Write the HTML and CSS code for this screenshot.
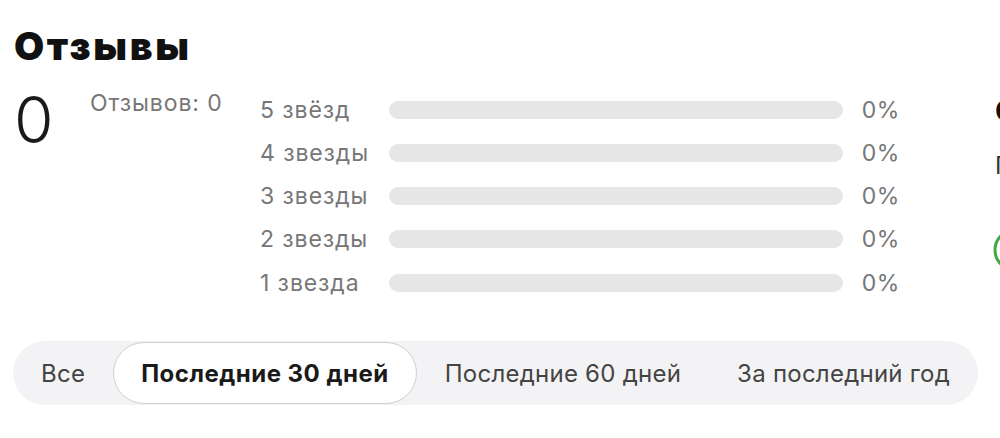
FILE: index.html
```html
<!DOCTYPE html>
<html lang="ru">
<head>
<meta charset="utf-8">
<title>Отзывы</title>
<link rel="stylesheet" href="styles.css">
</head>
<body>
<main class="page">
  <h1 class="title">Отзывы</h1>
  <section class="summary">
    <div class="score">0</div>
    <div class="count">Отзывов: 0</div>
    <ul class="dist">
      <li class="dist-row"><span class="dist-label">5 звёзд</span><span class="bar"><span class="bar-fill" style="width:0%"></span></span><span class="pct">0%</span></li>
      <li class="dist-row"><span class="dist-label">4 звезды</span><span class="bar"><span class="bar-fill" style="width:0%"></span></span><span class="pct">0%</span></li>
      <li class="dist-row"><span class="dist-label">3 звезды</span><span class="bar"><span class="bar-fill" style="width:0%"></span></span><span class="pct">0%</span></li>
      <li class="dist-row"><span class="dist-label">2 звезды</span><span class="bar"><span class="bar-fill" style="width:0%"></span></span><span class="pct">0%</span></li>
      <li class="dist-row"><span class="dist-label">1 звезда</span><span class="bar"><span class="bar-fill" style="width:0%"></span></span><span class="pct">0%</span></li>
    </ul>
    <aside class="side">
      <div class="side-title">Оценка</div>
      <div class="side-text">Пока нет оценок</div>
      <div class="side-icon">
        <svg width="44" height="44" viewBox="0 0 44 44"><circle cx="22" cy="22" r="20" fill="none" stroke="#43a944" stroke-width="3"/></svg>
      </div>
    </aside>
  </section>
  <nav class="tabs">
    <button class="tab">Все</button>
    <button class="tab tab-active">Последние 30 дней</button>
    <button class="tab">Последние 60 дней</button>
    <button class="tab">За последний год</button>
  </nav>
</main>
</body>
</html>
```

FILE: styles.css
```css
html, body {
  margin: 0;
  padding: 0;
  background: #ffffff;
  overflow: hidden;
}
body {
  font-family: Inter, "Liberation Sans", Arial, sans-serif;
  color: #222;
}
.page {
  padding: 21px 0 0 14px;
  width: 1200px;
}
.title {
  margin: 0;
  font-family: Inter, "Liberation Sans", sans-serif;
  font-weight: 900;
  font-size: 39px;
  line-height: 50px;
  color: #111;
  letter-spacing: 2.6px;
}
.summary {
  display: flex;
  align-items: flex-start;
  margin-top: 17px;
}
.score {
  width: 76px;
  font-size: 64px;
  line-height: 64px;
  font-weight: 300;
  color: #1a1a1a;
}
.count {
  width: 170px;
  margin-top: 1px;
  font-size: 23px;
  line-height: 28px;
  letter-spacing: 0.9px;
  color: #777;
  white-space: nowrap;
}
.dist {
  list-style: none;
  margin: 0;
  padding: 0;
  width: 640px;
}
.dist-row {
  display: flex;
  align-items: center;
  height: 43.25px;
  white-space: nowrap;
}
.dist-label {
  width: 129px;
  font-size: 23px;
  letter-spacing: 0.9px;
  color: #777;
}
.bar {
  width: 454px;
  height: 18px;
  border-radius: 9px;
  background: #e6e6e6;
  overflow: hidden;
}
.bar-fill {
  display: block;
  height: 100%;
  background: #43a944;
}
.pct {
  margin-left: 19px;
  font-size: 23px;
  letter-spacing: 0.6px;
  color: #777;
}
.side {
  margin-left: 95px;
  white-space: nowrap;
}
.side-title {
  margin-top: 6px;
  font-size: 28px;
  font-weight: 700;
  line-height: 34px;
  color: #111;
}
.side-text {
  margin-top: 24px;
  font-size: 24px;
  line-height: 28px;
  color: #333;
}
.side-icon {
  margin-top: 48px;
  margin-left: -2px;
  height: 44px;
}
.tabs {
  display: flex;
  width: 965px;
  height: 64px;
  margin-top: 37px;
  margin-left: -1px;
  background: #f3f3f5;
  border-radius: 32px;
  box-sizing: border-box;
  padding: 1px 0;
}
.tab {
  flex: none;
  white-space: nowrap;
  border: 1px solid transparent;
  background: transparent;
  border-radius: 31px;
  padding: 0 27px;
  font-family: Inter, "Liberation Sans", Arial, sans-serif;
  font-size: 24px;
  letter-spacing: 0.25px;
  color: #444;
  cursor: pointer;
}
.tab-active {
  background: #fff;
  border-color: #cfcfcf;
  font-weight: 700;
  color: #1a1a1a;
  letter-spacing: 0.5px;
}
```
